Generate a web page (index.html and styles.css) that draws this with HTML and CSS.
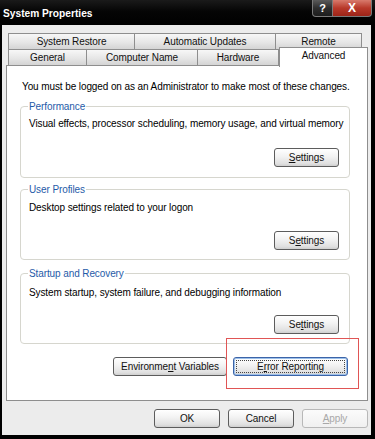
FILE: index.html
```html
<!DOCTYPE html>
<html>
<head>
<meta charset="utf-8">
<link rel="stylesheet" href="styles.css">
</head>
<body>
<div class="window">
  <div class="titlebar">
    <span class="title">System Properties</span>
    <div class="caption-btns">
      <span class="cbtn help">?</span>
      <span class="cbtn close">X</span>
    </div>
  </div>
  <div class="client">
    <div class="tabs">
      <div class="tabrow back">
        <div class="tab t-restore">System Restore</div>
        <div class="tab t-updates">Automatic Updates</div>
        <div class="tab t-remote">Remote</div>
      </div>
      <div class="tabrow front">
        <div class="tab t-general">General</div>
        <div class="tab t-name">Computer Name</div>
        <div class="tab t-hardware">Hardware</div>
        <div class="tab t-advanced selected">Advanced</div>
      </div>
    </div>
    <div class="panel">
      <p class="intro">You must be logged on as an Administrator to make most of these changes.</p>
      <fieldset class="group g1">
        <legend>Performance</legend>
        <p class="desc">Visual effects, processor scheduling, memory usage, and virtual memory</p>
        <div class="btnrow"><button class="btn settings"><u>S</u>ettings</button></div>
      </fieldset>
      <fieldset class="group g2">
        <legend>User Profiles</legend>
        <p class="desc">Desktop settings related to your logon</p>
        <div class="btnrow"><button class="btn settings">S<u>e</u>ttings</button></div>
      </fieldset>
      <fieldset class="group g3">
        <legend>Startup and Recovery</legend>
        <p class="desc">System startup, system failure, and debugging information</p>
        <div class="btnrow"><button class="btn settings">Se<u>t</u>tings</button></div>
      </fieldset>
      <div class="bottom-btns">
        <button class="btn env">Environme<u>n</u>t Variables</button>
        <div class="err-wrap">
          <button class="btn err"><span class="focus-rect">E<u>r</u>ror Reporting</span></button>
          <span class="redbox"></span>
        </div>
      </div>
    </div>
    <div class="dialog-btns">
      <button class="btn dlg">OK</button>
      <button class="btn dlg">Cancel</button>
      <button class="btn dlg disabled"><u>A</u>pply</button>
    </div>
  </div>
</div>
</body>
</html>
```

FILE: styles.css
```css
* { box-sizing: border-box; }
html, body {
  margin: 0;
  padding: 0;
  background: #000;
}
body {
  font-family: "Liberation Sans", Arial, sans-serif;
  font-size: 10px;
  letter-spacing: -0.1px;
  color: #000;
}
.window {
  width: 375px;
  height: 439px;
  background: #000;
  display: flex;
  flex-direction: column;
}
.titlebar {
  height: 25px;
  display: flex;
  align-items: flex-start;
  justify-content: space-between;
  background: linear-gradient(180deg, #1a1a1a 0%, #050505 45%, #000 100%);
}
.title {
  font-family: "Liberation Sans", Arial, sans-serif;
  font-weight: bold;
  font-size: 10.2px;
  letter-spacing: 0;
  color: #fff;
  padding: 8px 0 0 3px;
}
.caption-btns {
  display: flex;
  margin-right: 3px;
}
.cbtn {
  height: 17px;
  display: flex;
  align-items: center;
  justify-content: center;
  color: #fff;
  font-family: "Liberation Sans", Arial, sans-serif;
  font-weight: bold;
  font-size: 11px;
  border: 1px solid #7a7a7a;
  border-top: none;
}
.help {
  width: 21px;
  background: linear-gradient(180deg, #5a5a5a 0%, #2e2e2e 50%, #1c1c1c 100%);
  border-radius: 0 0 0 4px;
}
.close {
  width: 39px;
  background: linear-gradient(180deg, #d87a6c 0%, #b8392a 50%, #9c2418 100%);
  border-left: none;
  border-radius: 0 0 4px 0;
  font-size: 12px;
}
.client {
  flex: 1;
  margin: 0 4px 4px 2px;
  background: #ececec;
  display: flex;
  flex-direction: column;
}
.tabs {
  padding: 8px 0 0 6px;
  display: flex;
  flex-direction: column;
}
.tabrow {
  display: flex;
  height: 16px;
}
.tab {
  height: 16px;
  display: flex;
  align-items: center;
  justify-content: center;
  font-size: 10px;
  background: linear-gradient(180deg, #f7f7f7 0%, #e6e6e6 55%, #d4d4d4 100%);
  border: 1px solid #8e8e8e;
  border-right: none;
  border-bottom: none;
  color: #111;
}
.tabrow .tab:last-child { border-right: 1px solid #8e8e8e; }
.t-restore { width: 126px; }
.t-updates { width: 141px; }
.t-remote { width: 87px; }
.t-general { width: 78px; }
.t-name { width: 111px; }
.t-hardware { width: 82px; border-right: 1px solid #8e8e8e; }
.tab.selected {
  width: 89px;
  height: 20px;
  margin-top: -2px;
  background: #fff;
  border: 1px solid #8e8e8e;
  border-bottom: none;
  align-items: flex-start;
  padding-top: 2px;
  position: relative;
  z-index: 2;
}
.panel {
  margin: 0 3px 0 4px;
  background: #fff;
  border: 1px solid #8e8e8e;
  height: 336px;
  padding: 14px 0 0 0;
  display: flex;
  flex-direction: column;
}
.intro {
  margin: 0 0 0 15px;
  line-height: 13px;
  white-space: nowrap;
}
.group {
  margin: 6px 17px 0 13px;
  padding: 0 10px 9px 8px;
  border: 1px solid #d6d6ce;
  border-radius: 4px;
  min-width: 0;
}
.group.g1 { margin-top: 7px; padding-bottom: 10px; }
.group.g2 { margin-top: 5px; }
.group.g3 { margin-top: 7px; }
.group legend {
  color: #1f5ba8;
  padding: 0 1px;
  margin-left: -1px;
  line-height: 13px;
}
.desc {
  margin: 4px 0 0 0;
  line-height: 13px;
  white-space: nowrap;
}
.g2 .desc { margin-top: 5px; }
.g3 .desc { margin-top: 6px; }
.btnrow {
  display: flex;
  justify-content: flex-end;
  margin-top: 18px;
}
.g2 .btnrow { margin-top: 17px; }
.g3 .btnrow { margin-top: 16px; }
.btn {
  font-family: "Liberation Sans", Arial, sans-serif;
  font-size: 10px;
  letter-spacing: -0.1px;
  height: 19px;
  padding: 0;
  border: 1px solid #5c5c5c;
  border-radius: 3px;
  background: linear-gradient(180deg, #ffffff 0%, #f2f2f2 45%, #e0e0e0 85%, #cfcfcf 100%);
  color: #111;
  display: flex;
  align-items: center;
  justify-content: center;
}
.settings { width: 65px; }
.bottom-btns {
  display: flex;
  justify-content: flex-end;
  gap: 6px;
  margin: 13px 19px 0 0;
}
.env { width: 114px; }
.err-wrap {
  position: relative;
  display: flex;
}
.err {
  width: 115px;
  border-color: #3c64a8;
  box-shadow: inset 0 0 0 1px #9cc0ea;
}
.focus-rect {
  width: 109px;
  height: 13px;
  display: flex;
  align-items: center;
  justify-content: center;
  border: 1px dotted #444;
}
.redbox {
  position: absolute;
  left: -7px;
  right: -11px;
  top: -19px;
  bottom: -13px;
  border: 1px solid #e05555;
  pointer-events: none;
}
.dialog-btns {
  display: flex;
  justify-content: flex-end;
  gap: 8px;
  margin-top: 8px;
  padding-right: 3px;
}
.dlg { width: 66px; }
.disabled {
  color: #a8a8a8;
  border-color: #b8b8b8;
  background: linear-gradient(180deg, #fbfbfb 0%, #f0f0f0 100%);
}
```
